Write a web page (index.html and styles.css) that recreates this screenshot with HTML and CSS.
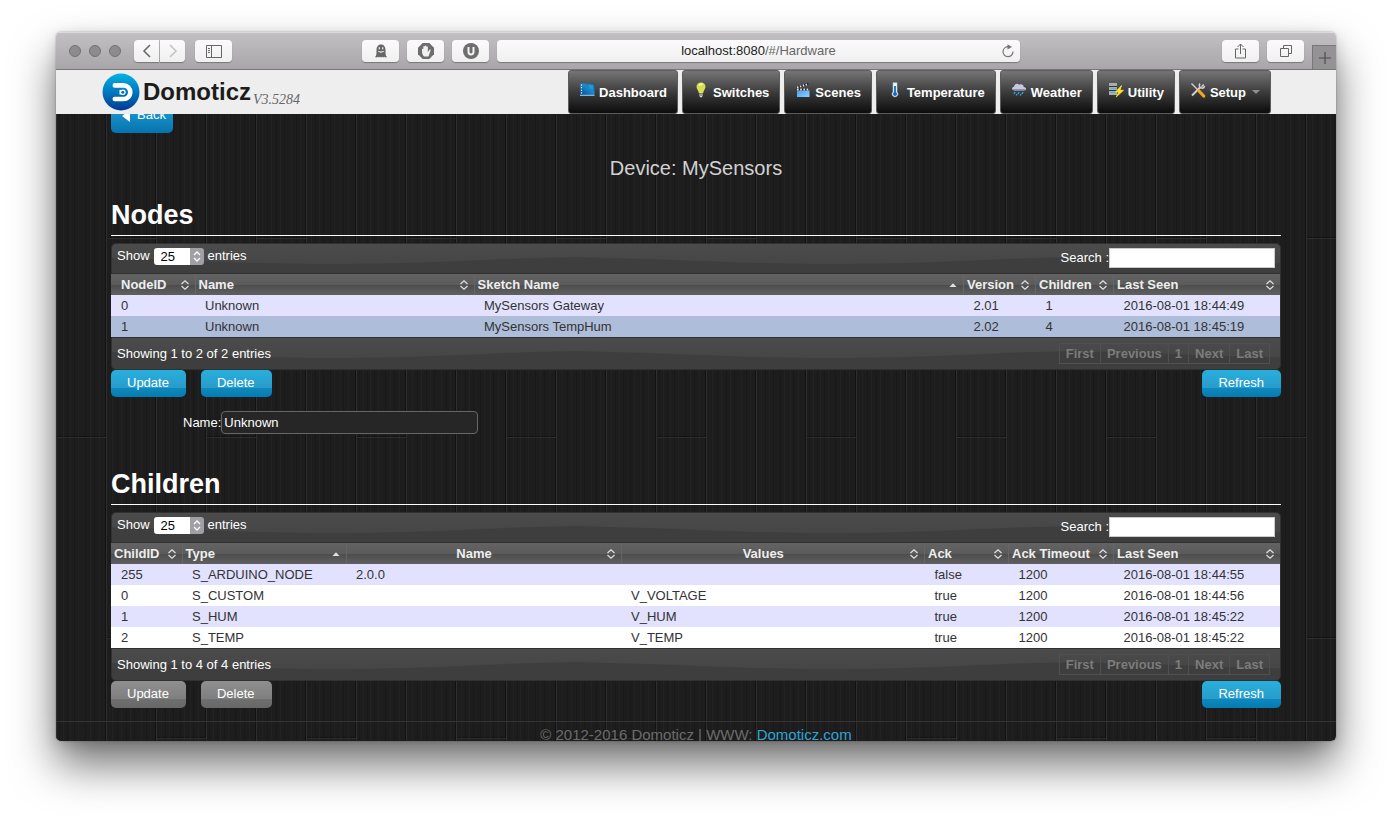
FILE: index.html
```html
<!DOCTYPE html>
<html lang="en">
<head>
<meta charset="utf-8">
<title>Domoticz</title>
<link rel="stylesheet" href="styles.css">
</head>
<body>
<svg class="defs" aria-hidden="true">
  <defs>
    <linearGradient id="logo-fill" x1="0" y1="0" x2="0" y2="1"><stop offset="0" stop-color="#00b4e4"/><stop offset="1" stop-color="#003a98"/></linearGradient>
    <linearGradient id="screen-fill" x1="0" y1="1" x2="1" y2="0"><stop offset="0" stop-color="#0a4a94"/><stop offset=".6" stop-color="#1a8ccc"/><stop offset="1" stop-color="#0a4f8e"/></linearGradient>
    <linearGradient id="clap-fill" x1="0" y1="0" x2="1" y2="1"><stop offset="0" stop-color="#3f9df0"/><stop offset="1" stop-color="#8fd0ff"/></linearGradient>
    <symbol id="sort-both" viewBox="0 0 10 10"><path d="M1.500 4 5 .8 8.500 4M1.500 6 5 9.200 8.500 6" fill="none" stroke="#e2e2e2" stroke-width="1.200"/></symbol>
    <symbol id="sort-up" viewBox="0 0 10 10"><path d="M1.500 7 5 3.200 8.500 7z" fill="#e2e2e2"/></symbol>
  </defs>
</svg>
<div class="window">
  <div class="titlebar">
    <div class="lights"><i></i><i></i><i></i></div>
    <div class="history">
      <button class="chrome-btn nav-back" aria-label="Back"><svg width="10" height="14" viewBox="0 0 10 14"><path d="M8 1 2 7l6 6" fill="none" stroke="#666" stroke-width="1.500"/></svg></button>
      <button class="chrome-btn nav-forward" aria-label="Forward"><svg width="10" height="14" viewBox="0 0 10 14"><path d="M2 1l6 6-6 6" fill="none" stroke="#c2c2c2" stroke-width="1.500"/></svg></button>
    </div>
    <button class="chrome-btn" aria-label="Sidebar"><svg width="16" height="13" viewBox="0 0 16 13"><path d="M.5.5h15v12H.5zM5.500.5v12M2 3.500h2M2 5.500h2M2 7.500h2" fill="none" stroke="#666"/></svg></button>
    <span class="space-left"></span>
    <div class="tools">
      <button class="chrome-btn" aria-label="Privacy"><svg width="14" height="14" viewBox="0 0 14 14"><path d="M1 13c1.500-1 1.500-3 1.500-7C2.500 2.500 4.500.5 7 .5s4.500 2 4.500 5.500c0 4 0 6 1.500 7-1 .6-2 .5-2.500-.3-.6.8-1.700.8-2.300 0-.6.8-1.800.8-2.400 0-.6.800-1.700.8-2.300 0C3 13.500 2 13.600 1 13z" fill="#666"/><path d="M5.300 3.300v2M8.700 3.300v2M4.500 7c1 1.500 4 1.500 5 0" fill="none" stroke="#f6f6f6" stroke-width="1.200"/></svg></button>
      <button class="chrome-btn" aria-label="Blocker"><svg width="18" height="18" viewBox="0 0 18 18"><path d="M5.700 1h6.600L17 5.700v6.600L12.300 17H5.700L1 12.300V5.700z" fill="#6d6d6d"/><path d="M7 14.500C5 12.500 5 10.500 5 7.500c0-1 1.300-1 1.300 0V5c0-1.200 1.500-1.200 1.500 0v-.7c0-1.100 1.500-1.100 1.500 0V5c0-1 1.500-1 1.500 0v5l1.700-2.200c1-.6 1.400.2 1 .8L11.500 14.500z" fill="#f1f1f1"/></svg></button>
      <button class="chrome-btn" aria-label="Filter"><svg width="18" height="18" viewBox="0 0 18 18"><circle cx="9" cy="9" r="8" fill="#6d6d6d"/><path d="M6.500 5v5C6.500 13.300 11.500 13.300 11.500 10V5" fill="none" stroke="#f3f3f3" stroke-width="2"/></svg></button>
    </div>
    <div class="address"><span class="url">localhost:8080<span class="path">/#/Hardware</span></span>
      <button class="reload" aria-label="Reload"><svg width="14" height="15" viewBox="0 0 14 15"><path d="M8 2.800A5 5 0 1 0 12 7.600" fill="none" stroke="#777" stroke-width="1.200"/><path d="M6.500.2 11 3 6.500 5.600z" fill="#777"/></svg></button>
    </div>
    <span class="space-right"></span>
    <div class="tools">
      <button class="chrome-btn" aria-label="Share"><svg width="14" height="16" viewBox="0 0 14 16"><path d="M4.500 6h-3v9h10V6h-3M6.500 11V1M3.500 4l3-3 3 3" fill="none" stroke="#666"/></svg></button>
      <button class="chrome-btn" aria-label="Tabs"><svg width="14" height="14" viewBox="0 0 14 14"><path d="M1.500 4.500h8v8h-8zM4.500 4V1.500h8v8H10" fill="none" stroke="#666"/></svg></button>
    </div>
    <button class="new-tab" aria-label="New tab"><svg width="12" height="12" viewBox="0 0 12 12"><path d="M6 0v12M0 6h12" stroke="#4c4c4c" stroke-width="1.200"/></svg></button>
  </div>

  <header class="header">
    <a class="brand" href="#">
      <svg width="38" height="38" viewBox="0 0 38 38"><circle cx="19" cy="19" r="18.500" fill="url(#logo-fill)"/><path d="M12.800 12.400h8.700a6.800 6.800 0 0 1 0 13.600h-8.700" fill="none" stroke="#fff" stroke-width="4.600" stroke-linecap="round"/><path d="M17.500 17h4v4.400h-4z" fill="#fff"/><circle cx="21" cy="19.200" r="2.700" fill="#fff"/><circle cx="20.800" cy="19.200" r="1.500" fill="#1268ba"/></svg>
      <span class="name">Domoticz</span><span class="version">V3.5284</span>
    </a>
    <nav class="menu">
      <a href="#"><svg width="16" height="16" viewBox="0 0 16 16"><path d="M1 1.500h14.500v11.500H1z" fill="url(#screen-fill)"/><path d="M1 13.300h14.500" stroke="#9bd8f6"/><path d="M2.500 2.500v9" stroke="#e4f6ff" stroke-width="1.200" stroke-dasharray="1.200 1.400"/><path d="M9 2.500l5.500 0v5C12 7.500 10 5.500 9 2.500z" fill="#48b6e8" opacity=".5"/></svg>Dashboard</a>
      <a href="#"><svg width="16" height="16" viewBox="0 0 16 16"><path d="M8 0.500c2.800 0 4.500 1.900 4.500 4.300 0 2.400-2 3.500-2.300 6.200H5.800C5.500 8.300 3.500 7.200 3.500 4.800 3.500 2.400 5.200.5 8 .5z" fill="#d5df50"/><path d="M6 3.500c1-1.500 2.500-1.500 3.500-1" stroke="#f8fbb9" stroke-width="1.500" fill="none"/><path d="M6.300 11.500h3.400v2.500L8 15.800l-1.700-1.800z" fill="#ddd"/><path d="M6.300 13h3.400" stroke="#555"/></svg>Switches</a>
      <a href="#"><svg width="16" height="16" viewBox="0 0 16 16"><path d="M2 7h12.500v8H2z" fill="url(#clap-fill)"/><path d="M1.300 4.500 13 .8l.6 2L2 6.500z" fill="#222"/><path d="M2 5.500 13.300 2" stroke="#ddd" stroke-width="2" stroke-dasharray="1.500 1.500"/><path d="M2 7.500h12.500" stroke="#222" stroke-width="1.800"/><path d="M2 7.500h12.500" stroke="#ddd" stroke-width="1.800" stroke-dasharray="1.700 1.500"/></svg>Scenes</a>
      <a href="#"><svg width="16" height="16" viewBox="0 0 16 16"><path d="M6 .8h4v9c2 2.500.5 5-2 5s-4-2.500-2-5z" fill="#eef7fc" stroke="#a8cce0" stroke-width=".6"/><path d="M8 4v7" stroke="#1769bb" stroke-width="1.800"/><circle cx="8" cy="12" r="2" fill="#1769bb"/></svg>Temperature</a>
      <a href="#"><svg width="16" height="16" viewBox="0 0 16 16"><path d="M3.500 8.500C.5 8.500.2 5 3 4.700 3.300 1.800 6.500.6 8.200 2.700c2-1.200 4.500 0 4.500 2.200 3.200.2 3 3.600.3 3.600z" fill="#c7c8df"/><path d="M2 7.500h12" stroke="#9192b5"/><path d="M4 10l-1 2M8 10l-1 2M12 10l-1 2M6 12l-.8 1.500M10 12l-.8 1.500" stroke="#27a3dd" stroke-width="1.500"/></svg>Weather</a>
      <a href="#"><svg width="16" height="16" viewBox="0 0 16 16"><path d="M1 1h8v12H1z" fill="#a9adb0"/><path d="M1 4.500h8M1 8.500h8" stroke="#333"/><path d="M3 6.500h6M3 10.500h5" stroke="#42bad4" stroke-width="1.200"/><path d="M13.500 3.500 7.500 10h3.200l-2.500 5L15.500 8.300H12z" fill="#ffe12c" stroke="#ffe12c" stroke-width=".8"/></svg>Utility</a>
      <a href="#"><svg width="16" height="16" viewBox="0 0 16 16"><path d="M2 13.500 10.500 5" stroke="#d0d0d0" stroke-width="2"/><path d="M13.800 2.500 11.500 4.700M10 1.500c-1.500 2-.5 4.500 1.500 4.600 1.500.2 2.800-.8 3-2.200" fill="none" stroke="#d0d0d0" stroke-width="1.500"/><path d="M1.500 1.500 8.500 8.500" stroke="#ccc" stroke-width="1.500"/><path d="M9 9l4.700 5" stroke="#f5a623" stroke-width="3.200" stroke-linecap="round"/></svg>Setup<svg class="caret" width="8" height="4" viewBox="0 0 8 4"><path d="M0 0h8L4 4z" fill="#8d8d8d"/></svg></a>
    </nav>
  </header>

  <main class="view">
    <div class="container">
      <button class="btn back"><svg width="8" height="12" viewBox="0 0 8 12"><path d="M8 0v12L0 6z" fill="#fff"/></svg>Back</button>
      <h1>Device: MySensors</h1>

      <section>
        <h2>Nodes</h2>
        <div class="bar top">
          <label>Show <select><option>25</option></select> entries</label>
          <label class="search">Search :<input type="text"></label>
        </div>
        <table class="nodes">
          <colgroup><col class="w84"><col class="w279"><col><col class="w72"><col class="w78"><col class="w167"></colgroup>
          <thead><tr>
            <th class="inset"><div>NodeID<svg><use href="#sort-both"/></svg></div></th>
            <th><div>Name<svg><use href="#sort-both"/></svg></div></th>
            <th><div>Sketch Name<svg><use href="#sort-up"/></svg></div></th>
            <th><div>Version<svg><use href="#sort-both"/></svg></div></th>
            <th><div>Children<svg><use href="#sort-both"/></svg></div></th>
            <th><div>Last Seen<svg><use href="#sort-both"/></svg></div></th>
          </tr></thead>
          <tbody>
            <tr class="odd"><td>0</td><td>Unknown</td><td>MySensors Gateway</td><td>2.01</td><td>1</td><td>2016-08-01 18:44:49</td></tr>
            <tr class="selected"><td>1</td><td>Unknown</td><td>MySensors TempHum</td><td>2.02</td><td>4</td><td>2016-08-01 18:45:19</td></tr>
          </tbody>
        </table>
        <div class="bar bottom">
          <span>Showing 1 to 2 of 2 entries</span>
          <div class="pager"><button disabled>First</button><button disabled>Previous</button><button disabled>1</button><button disabled>Next</button><button disabled>Last</button></div>
        </div>
        <div class="actions"><button class="btn">Update</button><button class="btn">Delete</button><button class="btn last">Refresh</button></div>
        <div class="field"><label for="node-name">Name:</label><input id="node-name" type="text" value="Unknown"></div>
      </section>

      <section class="children-section">
        <h2>Children</h2>
        <div class="bar top">
          <label>Show <select><option>25</option></select> entries</label>
          <label class="search">Search :<input type="text"></label>
        </div>
        <table class="children">
          <colgroup><col class="w71"><col class="w164"><col class="w275"><col><col class="w84"><col class="w105"><col class="w167"></colgroup>
          <thead><tr>
            <th><div>ChildID<svg><use href="#sort-both"/></svg></div></th>
            <th><div>Type<svg><use href="#sort-up"/></svg></div></th>
            <th class="centered"><div><span>Name</span><svg><use href="#sort-both"/></svg></div></th>
            <th class="centered"><div><span>Values</span><svg><use href="#sort-both"/></svg></div></th>
            <th><div>Ack<svg><use href="#sort-both"/></svg></div></th>
            <th><div>Ack Timeout<svg><use href="#sort-both"/></svg></div></th>
            <th><div>Last Seen<svg><use href="#sort-both"/></svg></div></th>
          </tr></thead>
          <tbody>
            <tr class="odd"><td>255</td><td>S_ARDUINO_NODE</td><td>2.0.0</td><td></td><td>false</td><td>1200</td><td>2016-08-01 18:44:55</td></tr>
            <tr><td>0</td><td>S_CUSTOM</td><td></td><td>V_VOLTAGE</td><td>true</td><td>1200</td><td>2016-08-01 18:44:56</td></tr>
            <tr class="odd"><td>1</td><td>S_HUM</td><td></td><td>V_HUM</td><td>true</td><td>1200</td><td>2016-08-01 18:45:22</td></tr>
            <tr><td>2</td><td>S_TEMP</td><td></td><td>V_TEMP</td><td>true</td><td>1200</td><td>2016-08-01 18:45:22</td></tr>
          </tbody>
        </table>
        <div class="bar bottom">
          <span>Showing 1 to 4 of 4 entries</span>
          <div class="pager"><button disabled>First</button><button disabled>Previous</button><button disabled>1</button><button disabled>Next</button><button disabled>Last</button></div>
        </div>
        <div class="actions"><button class="btn" disabled>Update</button><button class="btn" disabled>Delete</button><button class="btn last">Refresh</button></div>
      </section>
    </div>
    <footer>© 2012-2016 Domoticz | WWW: <a href="#">Domoticz.com</a></footer>
  </main>
</div>
</body>
</html>
```
FILE: styles.css
```css
* { box-sizing: border-box; }
body {
  margin: 0;
  padding: 32px 56px 80px;
  height: 100vh;
  background: #fff;
  font: 13px/20px "Liberation Sans", Arial, sans-serif;
  overflow: hidden;
}
button, input, select { font: inherit; margin: 0; }
button { display: flex; align-items: center; justify-content: center; border: 0; padding: 0; }
.defs { position: absolute; width: 0; height: 0; }

.window {
  display: flex;
  flex-direction: column;
  height: 100%;
  border-radius: 5px;
  overflow: hidden;
  box-shadow: 0 0 2px rgba(0, 0, 0, .35), 0 24px 44px rgba(0, 0, 0, .55), 0 4px 14px rgba(0, 0, 0, .15);
}

/* Browser toolbar */
.titlebar {
  display: flex;
  align-items: center;
  flex: none;
  height: 38px;
  padding-left: 13px;
  background: linear-gradient(#c2c0c2, #a8a6a8);
  border-top: 1px solid #dbdadb;
  border-bottom: 1px solid #777;
}
.lights { display: flex; gap: 8px; margin-right: 13px; }
.lights i { width: 12px; height: 12px; border-radius: 50%; background: #8c8b8e; border: 1px solid #737275; }
.history { display: flex; gap: 1px; margin-right: 10px; }
.chrome-btn {
  width: 37px;
  height: 22px;
  border-radius: 4px;
  background: linear-gradient(#fbfbfb, #f0f0f0);
  box-shadow: 0 1px 1px rgba(0, 0, 0, .3);
}
.nav-back { width: 25px; border-radius: 4px 0 0 4px; }
.nav-forward { width: 25px; border-radius: 0 4px 4px 0; }
.space-left { flex: 130 1 0; }
.space-right { flex: 202 1 0; }
.tools { display: flex; gap: 8px; }
.address {
  display: flex;
  align-items: center;
  flex: 512 1 0;
  height: 22px;
  margin-left: 8px;
  padding: 0 5px;
  border-radius: 4px;
  background: linear-gradient(#fbfbfb, #f0f0f0);
  box-shadow: 0 1px 1px rgba(0, 0, 0, .3);
}
.url { flex: 1; padding-left: 14px; text-align: center; color: #222; font-size: 13px; }
.path { color: #666; }
.reload { background: none; }
.new-tab {
  align-self: flex-end;
  width: 24px;
  height: 24px;
  margin-left: 8px;
  background: #949295;
  border: solid #777;
  border-width: 1px 0 0 1px;
}

/* Site header */
.header {
  display: flex;
  justify-content: space-between;
  flex: none;
  height: 44px;
  padding: 0 65px 0 46px;
  background: #eee;
}
.brand { display: flex; align-items: center; color: #1c1c1c; text-decoration: none; }
.name { margin-left: 3px; font: bold 24px/44px "Liberation Sans", Arial, sans-serif; }
.version { align-self: flex-end; margin-left: 2px; padding-bottom: 4px; color: #666; font: italic 14px/20px "Liberation Serif", serif; }
.menu { display: flex; gap: 4px; }
.menu a {
  display: flex;
  align-items: center;
  padding: 2px 10px 0;
  border: 1px solid #5c5c5c;
  border-radius: 3px;
  background: linear-gradient(#757575, #3c3c3c 50%, #0c0c0c);
  color: #fff;
  font-weight: bold;
  text-decoration: none;
}
.menu svg { margin: 0 4px 6px 0; }
.menu .caret { margin: 0 0 2px 6px; }

/* Page */
.view {
  flex: 1;
  min-height: 0;
  overflow: hidden;
  background: #1d1d1d url("data:image/svg+xml,%3Csvg xmlns='http://www.w3.org/2000/svg' width='150' height='400'%3E%3Cg fill='%23191919'%3E%3Cpath d='M3 0h1v400h-1zM11 0h1v400h-1zM18 0h1v400h-1zM29 0h1v400h-1zM38 0h1v400h-1zM61 0h1v400h-1zM70 0h1v400h-1zM78 0h1v400h-1zM90 0h1v400h-1zM109 0h1v400h-1zM117 0h1v400h-1zM124 0h1v400h-1zM137 0h1v400h-1z'/%3E%3C/g%3E%3Cpath d='M49 0h1v400h-1zM99 0h1v400h-1zM149 0h1v400h-1zM50 123h50v1h-50zM0 322h50v1h-50zM100 223h50v1h-50z' fill='%23121212'/%3E%3Cg fill='%23222222'%3E%3Cpath d='M7 0h1v400h-1zM14 0h1v400h-1zM22 0h1v400h-1zM34 0h1v400h-1zM43 0h1v400h-1zM56 0h1v400h-1zM65 0h1v400h-1zM74 0h1v400h-1zM85 0h1v400h-1zM94 0h1v400h-1zM105 0h1v400h-1zM113 0h1v400h-1zM128 0h1v400h-1zM134 0h1v400h-1zM142 0h1v400h-1z'/%3E%3C/g%3E%3Cpath d='M0 0h1v400h-1zM50 0h1v400h-1zM100 0h1v400h-1zM50 124h50v1h-50zM0 323h50v1h-50zM100 224h50v1h-50z' fill='%232e2e2e'/%3E%3C/svg%3E");
}
.container { margin: -8px 55px 0; }
.btn {
  height: 27px;
  padding: 0 17px 2px 16px;
  border-radius: 5px;
  background: linear-gradient(#27b0dc, #2a9bcb 66%, #0d89be 67%, #057bb2);
  color: #fff;
}
.btn:disabled { background: linear-gradient(#8f8f8f, #7f7f7f 66%, #6f6f6f 67%, #686868); }
.back { gap: 7px; padding: 0 7px 9px 11px; background: linear-gradient(#1f9ccf, #0673b0); }
.back svg { margin-top: 2px; }
h1 { margin: 25px 0 22px; color: #d2d2d2; font-size: 20px; font-weight: normal; line-height: 20px; text-align: center; }
h2 {
  margin: 0 0 7px;
  padding-bottom: 5px;
  border-bottom: 1px solid #fff;
  color: #fff;
  font-size: 27px;
  line-height: 30px;
}
.children-section { margin-top: 35px; }

.bar {
  display: flex;
  align-items: center;
  justify-content: space-between;
  padding: 0 5px;
  border: 1px solid #303030;
  background: #3e3e3e url("data:image/svg+xml,%3Csvg xmlns='http://www.w3.org/2000/svg' width='500' height='32'%3E%3ClinearGradient id='g' x2='0' y2='1'%3E%3Cstop stop-color='%234b4b4b'/%3E%3Cstop offset='1' stop-color='%23464646'/%3E%3C/linearGradient%3E%3Cpath d='M0 0H500V14C480 13 450 13 420 14C340 17 290 20 220 20C140 20 80 16 0 14z' fill='url(%23g)'/%3E%3C/svg%3E");
  color: #fff;
}
.bar.top { height: 31px; padding-bottom: 5px; border-radius: 5px 5px 0 0; }
.bar.bottom { height: 33px; padding-right: 10px; border-radius: 0 0 5px 5px; }
.bar label { display: flex; align-items: center; gap: 4px; }
.bar .search { gap: 0; padding-top: 3px; }
.search input { width: 166px; height: 20px; border: 1px solid #ccc; background: #fff; }
select {
  appearance: none;
  width: 50px;
  height: 17px;
  padding: 0 7px;
  border: 0;
  border-radius: 3px;
  background: #fff url("data:image/svg+xml,%3Csvg xmlns='http://www.w3.org/2000/svg' width='14' height='17'%3E%3Cpath d='M0 0h14v17H0z' fill='%23a09fa3'/%3E%3Cpath d='M4 7l3-3 3 3M4 10l3 3 3-3' fill='none' stroke='%23fff' stroke-width='1.300'/%3E%3C/svg%3E") right no-repeat;
  color: #000;
  line-height: 17px;
}

table { width: 100%; border-collapse: collapse; table-layout: fixed; border-right: 1px solid #303030; }
.w71 { width: 71px; } .w72 { width: 72px; } .w78 { width: 78px; } .w84 { width: 84px; }
.w105 { width: 105px; } .w164 { width: 164px; } .w167 { width: 167px; }
.w275 { width: 275px; } .w279 { width: 279px; }
th {
  height: 21px;
  padding: 0 5px 0 3px;
  border-right: 1px solid #666;
  background: linear-gradient(#636363, #5b5b5b 50%, #4c4c4c 51%, #606060);
  color: #eee;
  line-height: 20px;
  text-align: left;
}
th:last-child { border-right: 0; }
th.inset { padding-left: 10px; }
th div { display: flex; align-items: center; justify-content: space-between; white-space: nowrap; }
th svg { flex: none; width: 10px; height: 10px; }
.centered span { flex: 1; padding-right: 7px; text-align: center; }
td { height: 21px; padding: 0 10px; background: #fff; color: #333; line-height: 21px; }
.odd td { background: #e2e2ff; }
.selected td { background: #aebdd9; }

.pager { display: flex; }
.pager button {
  min-width: 20px;
  height: 21px;
  padding: 0 6px;
  border: 1px solid #505050;
  color: #7c7c7c;
  background: none;
  font-weight: bold;
}
.pager button + button { margin-left: -1px; }

.actions { display: flex; gap: 15px; }
.last { margin-left: auto; }
.field { display: flex; align-items: center; margin-top: 14px; padding-left: 72px; color: #fff; }
.field input {
  width: 257px;
  height: 23px;
  padding: 0 2px;
  border: 1px solid #666;
  border-radius: 4px;
  background: #262626;
  color: #fff;
}
footer {
  margin-top: 13px;
  padding-top: 3px;
  border-top: 1px solid #333;
  color: #6c6c6c;
  font-size: 15px;
  text-align: center;
}
footer a { color: #2da5d5; text-decoration: none; }
```
